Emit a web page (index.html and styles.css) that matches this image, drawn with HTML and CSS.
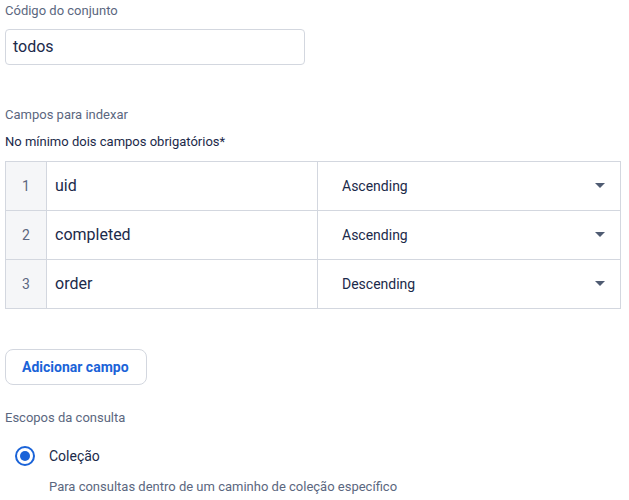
FILE: index.html
```html
<!DOCTYPE html>
<html lang="pt">
<head>
<meta charset="utf-8">
<link rel="stylesheet" href="styles.css">
</head>
<body>
<div class="page">
  <div class="label first">Código do conjunto</div>
  <div class="input">todos</div>

  <div class="label section">Campos para indexar</div>
  <div class="hint">No mínimo dois campos obrigatórios*</div>

  <div class="table">
    <div class="row">
      <div class="num">1</div>
      <div class="field">uid</div>
      <div class="sort"><span>Ascending</span><span class="caret"></span></div>
    </div>
    <div class="row">
      <div class="num">2</div>
      <div class="field">completed</div>
      <div class="sort"><span>Ascending</span><span class="caret"></span></div>
    </div>
    <div class="row">
      <div class="num">3</div>
      <div class="field">order</div>
      <div class="sort"><span>Descending</span><span class="caret"></span></div>
    </div>
  </div>

  <button class="add">Adicionar campo</button>

  <div class="label scopes">Escopos da consulta</div>
  <div class="radio-row">
    <span class="radio"><span class="dot"></span></span>
    <span class="radio-label">Coleção</span>
  </div>
  <div class="desc">Para consultas dentro de um caminho de coleção específico</div>
</div>
</body>
</html>
```
FILE: styles.css
```css
* { box-sizing: border-box; }
html, body { margin: 0; padding: 0; background: #fff; }
body { font-family: Roboto, "Noto Sans", Arial, sans-serif; color: #1b2a4a; }
.page { width: 616px; margin-left: 5px; display: flex; flex-direction: column; align-items: flex-start; }

.label { font-size: 13px; line-height: 16px; color: #5b6780; }
.first { margin-top: 3px; }
.input {
  margin-top: 10px; width: 300px; height: 36px;
  border: 1px solid #d3d7df; border-radius: 4px;
  padding: 0 7px; font-size: 16px; line-height: 34px; color: #1b2a4a;
}
.section { margin-top: 42px; }
.hint { margin-top: 11px; font-size: 13px; line-height: 16px; color: #1b2a4a; }

.table {
  margin-top: 11px; width: 616px;
  border: 1px solid #d3d7df; border-bottom: none;
}
.row { display: grid; grid-template-columns: 41px 271px 1fr; height: 49px; border-bottom: 1px solid #d3d7df; }
.num {
  background: #f5f6f8; border-right: 1px solid #d3d7df;
  display: flex; align-items: center; justify-content: center;
  font-size: 14px; color: #5b6780;
}
.field {
  border-right: 1px solid #d3d7df; padding-left: 8px; padding-bottom: 1px;
  display: flex; align-items: center; font-size: 16px; color: #1b2a4a;
}
.sort {
  padding: 0 15px 1px 24px; display: flex; align-items: center; justify-content: space-between;
  font-size: 14px; color: #1b2a4a;
}
.caret {
  width: 0; height: 0;
  border-left: 5px solid transparent; border-right: 5px solid transparent;
  border-top: 5px solid #4f5b72;
}

.add {
  margin-top: 40px; height: 36px; padding: 0 17px 0 16px;
  background: #fff; border: 1px solid #d3d7df; border-radius: 8px;
  font-family: inherit; font-size: 14px; font-weight: 700; color: #1a63d8;
}

.scopes { margin-top: 25px; }
.radio-row { margin-top: 20px; display: flex; align-items: center; height: 20px; padding-left: 10px; }
.radio {
  width: 20px; height: 20px; border: 2px solid #1a63d8; border-radius: 50%;
  display: flex; align-items: center; justify-content: center;
}
.dot { width: 10px; height: 10px; border-radius: 50%; background: #1a63d8; }
.radio-label { margin-left: 14px; font-size: 14px; color: #1b2a4a; }
.desc { margin-top: 13px; margin-left: 44px; font-size: 13px; line-height: 16px; color: #5b6780; }
```
